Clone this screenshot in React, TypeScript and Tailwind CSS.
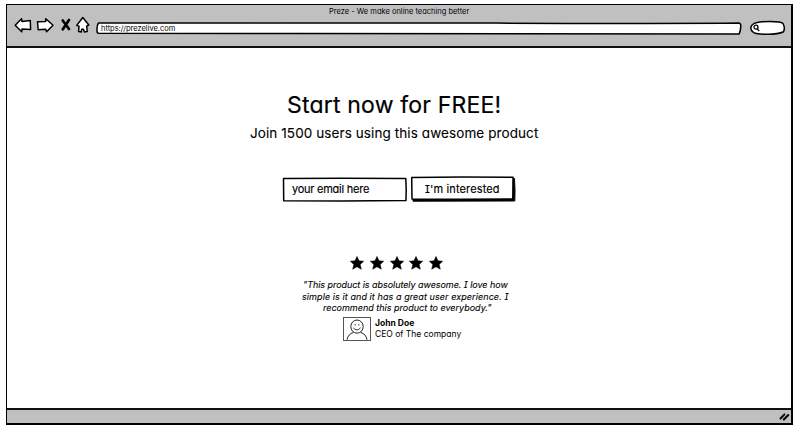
import type { ReactNode } from "react";

const sketch =
  "font-['Inter','Noto_Sans',sans-serif] [font-feature-settings:'cv11','cv08'] text-black";

function NavIcons() {
  return (
    <div className="flex h-[20px] w-[78px] shrink-0 items-start">
      <svg width="78" height="20" viewBox="14 15 78 20" fill="white" stroke="black" strokeWidth="1.5" strokeLinejoin="round" strokeLinecap="round">
        <path d="M15.2 25.2 L21.6 18.8 L22 21.4 L30.3 20.5 L30.6 29.5 L22 29 L21.7 31.8 Z" />
        <path d="M37.5 21.7 L45.6 21.4 L45.8 18.7 L53 25.3 L46.6 31.8 L45.7 29.2 L38.2 29.8 Z" />
        <path d="M62.7 20.5 Q65.5 24 69 29 M69 20 Q66 24.5 62.8 29.3" strokeWidth="2.7" fill="none" />
        <path d="M82.8 17.5 L88.8 25 L86.7 26.2 L87.2 31.5 L84.3 31.9 L83.5 29.3 L81.7 29.2 L81.2 32 L78.6 31.6 L79 26.3 L76.7 25.4 Z" />
      </svg>
    </div>
  );
}

function Line({ children, className }: { children: ReactNode; className: string }) {
  return <div className={"whitespace-nowrap " + className}>{children}</div>;
}

/* Hand-drawn outline laid behind the contents of a field or button. */
function Outline({ w, h, children }: { w: number; h: number; children: ReactNode }) {
  return (
    <svg
      className="absolute left-0 top-0 -z-10"
      width={w}
      height={h}
      viewBox={`0 0 ${w} ${h}`}
      fill="white"
      stroke="black"
      strokeWidth="1.5"
      strokeLinejoin="round"
    >
      {children}
    </svg>
  );
}

function Star() {
  return (
    <svg width="14" height="14" viewBox="0 0 14 14">
      <path d="M7 .4 L9 4.8 L13.7 5.2 L10.2 8.4 L11.3 13.2 L7 10.8 L2.7 13.2 L3.8 8.4 L.3 5.2 L5 4.8 Z" stroke="black" strokeWidth=".5" strokeLinejoin="round" />
    </svg>
  );
}

function Avatar() {
  return (
    <div className="h-[24px] w-[28px] border border-[#555]">
      <svg width="26" height="22" viewBox="0 0 26 22" fill="none" stroke="#222" strokeWidth="1">
        <ellipse cx="13" cy="8.6" rx="6.2" ry="6.6" />
        <path d="M9.2 9.8 Q13 14 16.6 9.8 M11.2 6 V7.4 M14.8 6 V7.4" strokeWidth=".9" />
        <path d="M3 21.7 Q4 16.2 9.4 14.4 M16.6 14.4 Q22.2 16.2 23 21.7" />
      </svg>
    </div>
  );
}

export default function App() {
  return (
    <div className={"h-[429px] w-[800px] bg-white pl-[6px] pt-[4px] " + sketch}>
      <div className="flex h-[421px] w-[787px] flex-col border border-r-2 border-b-2 border-black">
        <header className="h-[43px] shrink-0 border-b-2 border-[#111] bg-[#c0c0c0]">
          <Line className="h-[13px] pl-[322px] pt-px text-[7.5px] leading-[12px]">
            Preze - We make online teaching better
          </Line>
          <div className="-mt-[3px] flex h-[20px] pl-[7px]">
            <NavIcons />
            <div className="relative isolate ml-[4px] mt-[6px] h-[14px] w-[646px] pl-[5px] pt-[3px] text-[7.5px] leading-[9px] tracking-[-0.03px]">
              <Outline w={646} h={14}>
                <path d="M2.5 2 Q200 1.5 400 2.1 T643 2 Q645 2.4 644.8 5.4 Q644.6 9.4 643.2 13 Q420 13.2 200 12.6 Q80 12.6 2.5 12.3 Q1 12.2 1 9.4 Q.7 4.4 2.5 2 Z" />
              </Outline>
              https://prezelive.com
            </div>
            <div className="relative isolate ml-[8px] mt-[5px] flex h-[16px] w-[38px] items-center pl-[3px]">
              <Outline w={38} h={16}>
                <path d="M4.2 3.4 Q9 1.4 20 1.4 Q31 1.4 33 3.5 Q35.4 8 33.5 11.8 Q28 14.4 17 14.3 Q7 14.2 3.7 12.6 Q.5 10.5 .8 7.5 Q1.4 4.7 4.2 3.4 Z" />
              </Outline>
              <svg width="7" height="8" viewBox="0 0 7 8" fill="none" stroke="black" strokeWidth="1.3">
                <circle cx="3" cy="3.2" r="2" />
                <path d="M4.3 4.8 L6.2 7.2" />
              </svg>
            </div>
          </div>
        </header>

        <main className="flex-1 overflow-hidden">
          <Line className="ml-[280px] mt-[42px] text-[23px] leading-[30px] tracking-[0.19px] [-webkit-text-stroke:0.2px_black]">
            Start now for FREE!
          </Line>
          <Line className="ml-[243px] mt-[3px] text-[13.5px] leading-[20px] tracking-[0.09px] [-webkit-text-stroke:0.1px_black]">
            Join 1500 users using this awesome product
          </Line>
          <div className="ml-[275px] mt-[33px] flex">
            <div className="relative isolate mt-px h-[26px] w-[126px] pl-[10px] text-[11px] leading-[25px] tracking-[-0.25px] [-webkit-text-stroke:0.15px_black]">
              <Outline w={126} h={26}>
                <path d="M1.5 1.6 L60 1.2 L123.8 1.6 L124.2 12 L124 23.6 L60 24 L1.7 23.8 Z" />
              </Outline>
              your email here
            </div>
            <button className="relative isolate ml-[2px] block h-[27px] w-[107px] pl-[15px] text-left text-[11px] leading-[25px] tracking-[0.14px] [-webkit-text-stroke:0.15px_black]">
              <Outline w={107} h={27}>
                <path d="M3 3.4 L104.5 2.6 L105 14 L104.8 25 L3 25.2 Z" fill="black" strokeWidth="1" />
                <path d="M1.7 1.4 L52 1 L103 1.2 L102.8 23 L52 23.2 L2 23.1 Z" />
              </Outline>
              I'm interested
            </button>
          </div>
          <div className="ml-[343px] mt-[53px] flex gap-[5.75px]">
            <Star />
            <Star />
            <Star />
            <Star />
            <Star />
          </div>
          <div className="mt-[9px] text-[9px] italic leading-[11.5px] [-webkit-text-stroke:0.1px_black]">
            <Line className="ml-[296px] tracking-[-0.05px]">"This product is absolutely awesome. I love how</Line>
            <Line className="ml-[295px] tracking-[0.08px]">simple is it and it has a great user experience. I</Line>
            <Line className="ml-[316px]">recommend this product to everybody."</Line>
          </div>
          <div className="ml-[336px] mt-[3px] flex">
            <Avatar />
            <div className="ml-[4px] mt-px text-[8.5px] leading-[11.5px]">
              <Line className="font-bold">John Doe</Line>
              <Line className="">CEO of The company</Line>
            </div>
          </div>
        </main>

        <footer className="flex h-[15px] shrink-0 items-center justify-end border-t-2 border-[#111] bg-[#c0c0c0] pr-px">
          <svg width="11" height="9" viewBox="0 0 11 9" stroke="black" strokeWidth="2" strokeLinecap="round">
            <path d="M1.5 6.5 L5.5 2.4 M4.8 7.5 L9.3 3" />
          </svg>
        </footer>
      </div>
    </div>
  );
}
